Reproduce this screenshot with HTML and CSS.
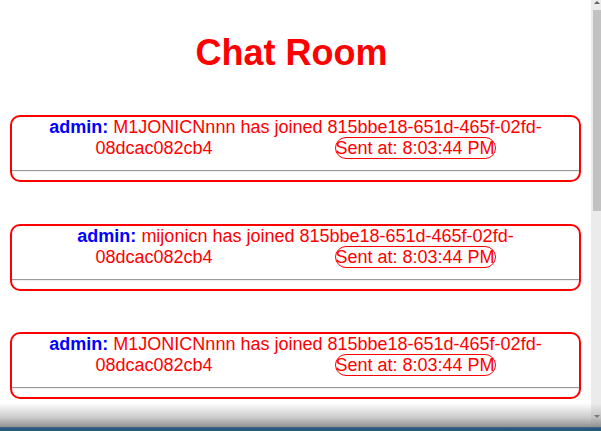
FILE: index.html
```html
<!DOCTYPE html>
<html lang="en">
<head>
<meta charset="utf-8">
<title>Chat Room</title>
<link rel="stylesheet" href="styles.css">
</head>
<body>
<div class="screen">
  <div class="viewport">
    <main class="page">
      <h1 class="title">Chat Room</h1>
      <div class="card">
        <p class="message"><b class="user">admin:</b> M1JONICNnnn has joined 815bbe18-651d-465f-02fd-08dcac082cb4<span class="time">Sent at: 8:03:44 PM</span></p>
        <hr class="divider">
      </div>
      <div class="card">
        <p class="message"><b class="user">admin:</b> mijonicn has joined 815bbe18-651d-465f-02fd-08dcac082cb4<span class="time">Sent at: 8:03:44 PM</span></p>
        <hr class="divider">
      </div>
      <div class="card">
        <p class="message"><b class="user">admin:</b> M1JONICNnnn has joined 815bbe18-651d-465f-02fd-08dcac082cb4<span class="time">Sent at: 8:03:44 PM</span></p>
        <hr class="divider">
      </div>
    </main>
    <div class="scrollbar">
      <span class="arrow arrow-up"></span>
      <div class="thumb"></div>
      <span class="arrow arrow-down"></span>
    </div>
    <div class="shade"></div>
  </div>
  <div class="taskbar"></div>
</div>
</body>
</html>
```
FILE: styles.css
```css
html, body {
  margin: 0;
  padding: 0;
  background: #ffffff;
}

body {
  font-family: "Liberation Sans", Arial, sans-serif;
  font-size: 16px;
}

.screen {
  width: 601px;
  height: 431px;
  display: flex;
  flex-direction: column;
  overflow: hidden;
}

.viewport {
  position: relative;
  height: 427px;
  display: flex;
  flex-direction: row;
  overflow: hidden;
}

.page {
  flex: 1;
  display: block;
  padding: 8px;
  min-width: 0;
}

.title {
  margin: 24px 0 0;
  padding-right: 8px;
  font-size: 36px;
  font-weight: bold;
  color: #ff0000;
  text-align: center;
  line-height: normal;
}

.card {
  margin: 41px 2px 41.5px;
  border: 2px solid #ff0000;
  border-radius: 10px;
  text-align: center;
}

.message {
  margin: 0;
  padding-bottom: 3px;
  font-size: 18px;
  line-height: normal;
  color: #ff0000;
}

.user {
  color: #0000ff;
  font-weight: bold;
}

.time {
  margin-left: 122px;
  border: 1px solid #ff0000;
  border-radius: 11px;
}

.divider {
  margin: 8px 0;
  height: 0;
  border: 0;
  border-top: 1px solid #9a9a9a;
  border-bottom: 1px solid #eeeeee;
}

.scrollbar {
  width: 10px;
  flex: 0 0 10px;
  background: #ebebeb;
  display: flex;
  flex-direction: column;
  align-items: flex-end;
}

.thumb {
  width: 8px;
  height: 201px;
  background: #c2c2c2;
}

.arrow {
  display: block;
  width: 0;
  height: 0;
  border-left: 3px solid transparent;
  border-right: 3px solid transparent;
  margin-right: 1px;
}

.arrow-up {
  border-bottom: 3px solid #606060;
  margin-top: 1px;
  margin-bottom: 6px;
}

.arrow-down {
  border-top: 3px solid #505050;
  margin-top: auto;
  margin-bottom: 9px;
}

.shade {
  position: absolute;
  left: 0;
  right: 0;
  bottom: 0;
  height: 24px;
  background: linear-gradient(to bottom, rgba(255, 255, 255, 0), rgba(160, 160, 160, 0.55) 60%, rgba(140, 140, 140, 0.95));
  pointer-events: none;
}

.taskbar {
  height: 3px;
  background: #2b587f;
  border-top: 1px solid #3f6586;
}
```
